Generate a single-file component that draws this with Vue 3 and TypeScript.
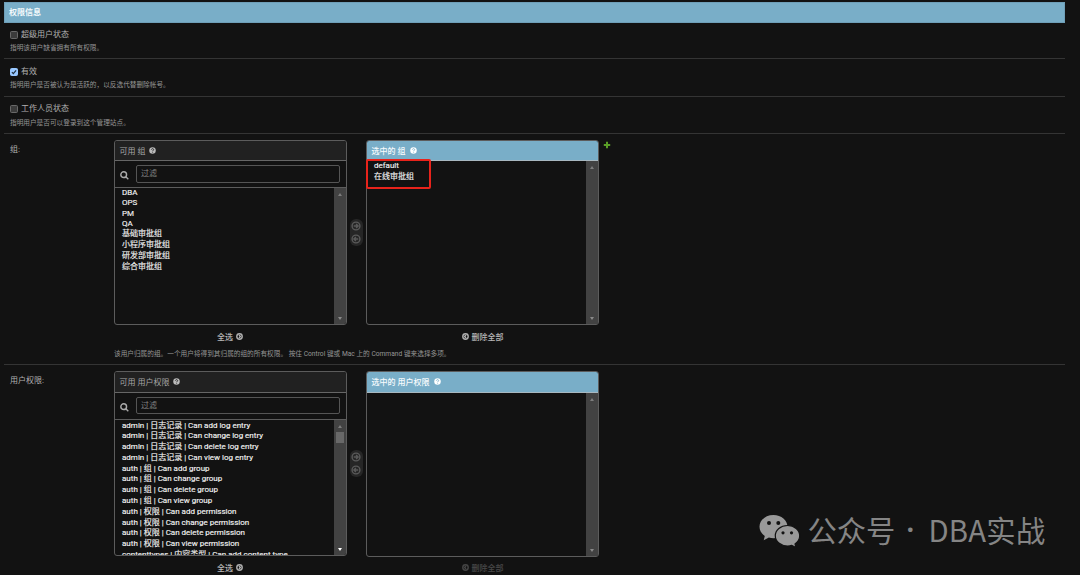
<script setup lang="ts">
interface Flag {
  label: string
  help: string
  checked: boolean
}
interface Selector {
  key: string
  label: string
  name: string
  available: string[]
  chosen: string[]
  help: string
}

const flags: Flag[] = [
  { label: '超级用户状态', help: '指明该用户缺省拥有所有权限。', checked: false },
  { label: '有效', help: '指明用户是否被认为是活跃的，以反选代替删除帐号。', checked: true },
  { label: '工作人员状态', help: '指明用户是否可以登录到这个管理站点。', checked: false },
]

const selectors: Selector[] = [
  {
    key: 'groups',
    label: '组:',
    name: '组',
    available: ['DBA', 'OPS', 'PM', 'QA', '基础审批组', '小程序审批组', '研发部审批组', '综合审批组'],
    chosen: ['default', '在线审批组'],
    help: '该用户归属的组。一个用户将得到其归属的组的所有权限。 按住 Control 键或 Mac 上的 Command 键来选择多项。',
  },
  {
    key: 'perms',
    label: '用户权限:',
    name: '用户权限',
    available: [
      'admin | 日志记录 | Can add log entry',
      'admin | 日志记录 | Can change log entry',
      'admin | 日志记录 | Can delete log entry',
      'admin | 日志记录 | Can view log entry',
      'auth | 组 | Can add group',
      'auth | 组 | Can change group',
      'auth | 组 | Can delete group',
      'auth | 组 | Can view group',
      'auth | 权限 | Can add permission',
      'auth | 权限 | Can change permission',
      'auth | 权限 | Can delete permission',
      'auth | 权限 | Can view permission',
      'contenttypes | 内容类型 | Can add content type',
    ],
    chosen: [],
    help: '',
  },
]

const isLatin = (text: string): boolean => /^[\x00-\x7f]+$/.test(text)
</script>

<template>
  <main class="page">
    <h2 class="module-title">权限信息</h2>

    <section v-for="flag in flags" :key="flag.label" class="flag-row">
      <div class="flag-line">
        <span class="checkbox" :class="{ checked: flag.checked }">
          <svg v-if="flag.checked" viewBox="0 0 8 8"><path d="M1.2 4.2 3.1 6.1 6.8 1.7" /></svg>
        </span>
        <span>{{ flag.label }}</span>
      </div>
      <p class="help">{{ flag.help }}</p>
    </section>

    <section v-for="s in selectors" :key="s.key" class="selector-row" :class="s.key">
      <div class="row-label">{{ s.label }}</div>
      <div class="row-body">
        <div class="selector">
          <div class="column">
            <div class="box available">
              <h3 class="box-title">
                <span>可用 {{ s.name }}</span>
                <svg class="q" viewBox="0 0 8 8"><circle cx="4" cy="4" r="3.7" /><path d="M2.8 3.1C2.8 1.5 5.3 1.5 5.3 3 5.3 3.9 4.1 3.8 4.1 4.8M4.1 5.6V6.4" /></svg>
              </h3>
              <div class="filter">
                <svg class="search" viewBox="0 0 10 10"><circle cx="4.1" cy="4.1" r="3.2" /><path d="m6.5 6.5 2.7 2.7" /></svg>
                <div class="input">过滤</div>
              </div>
              <div class="list">
                <ul class="options">
                  <li v-for="o in s.available" :key="o" :class="{ latin: isLatin(o) }">{{ o }}</li>
                </ul>
                <div class="scrollbar">
                  <i class="up"></i>
                  <b v-if="s.key === 'perms'" class="thumb"></b>
                  <i class="down" :class="{ active: s.key === 'perms' }"></i>
                </div>
              </div>
            </div>
            <div class="action all">
              <span>全选</span>
              <svg class="chev" viewBox="0 0 8 8"><circle cx="4" cy="4" r="3.1" /><path d="M3.4 2.4 5 4 3.4 5.6" /></svg>
            </div>
          </div>

          <div class="chooser">
            <svg viewBox="0 0 10 10"><circle cx="5" cy="5" r="3.9" /><path d="M2.8 5H7M5.1 3 7.1 5 5.1 7" /></svg>
            <svg viewBox="0 0 10 10"><circle cx="5" cy="5" r="3.9" /><path d="M7.200 5H3M4.900 3 2.900 5 4.900 7" /></svg>
          </div>

          <div class="column">
            <div class="box chosen">
              <h3 class="box-title">
                <span>选中的 {{ s.name }}</span>
                <svg class="q" viewBox="0 0 8 8"><circle cx="4" cy="4" r="3.7" /><path d="M2.8 3.1C2.8 1.5 5.3 1.5 5.3 3 5.3 3.9 4.1 3.8 4.1 4.8M4.1 5.6V6.4" /></svg>
              </h3>
              <div class="list">
                <ul class="options">
                  <li v-for="o in s.chosen" :key="o" :class="{ latin: isLatin(o) }">{{ o }}</li>
                </ul>
                <div class="scrollbar">
                  <i class="up"></i>
                  <i class="down"></i>
                </div>
              </div>
              <div v-if="s.key === 'groups'" class="highlight"></div>
            </div>
            <div class="action clear" :class="{ disabled: s.chosen.length === 0 }">
              <svg class="chev" viewBox="0 0 8 8"><circle cx="4" cy="4" r="3.1" /><path d="M4.600 2.400 3 4 4.600 5.600" /></svg>
              <span>删除全部</span>
            </div>
          </div>

          <svg v-if="s.key === 'groups'" class="plus" viewBox="0 0 8 8"><path d="M4 .8V7.2M.8 4H7.2" /></svg>
        </div>
        <p v-if="s.help" class="help wide">{{ s.help }}</p>
      </div>
    </section>

    <div class="watermark">
      <svg class="wechat" viewBox="0 0 42 34">
        <path class="bubble" d="M14.5 1C6.6 1 .5 6.2.5 12.8c0 3.8 2 7 5.300 9.200L4.700 26.300l5.200-2.700c1.500.4 3 .6 4.600.6C22.500 24.200 28.500 19.300 28.500 12.800 28.500 6.200 22.400 1 14.500 1Z" />
        <path class="bubble front" d="M28.500 11.500C21.600 11.500 16.300 16 16.300 21.800s5.300 10.200 12.200 10.200c1.500 0 2.900-.2 4.200-.6L37 33.600l-1-3.700c2.900-1.900 4.700-4.800 4.700-8.100 0-5.800-5.300-10.300-12.200-10.300Z" />
        <g class="eyes"><circle cx="10" cy="9" r="2" /><circle cx="19.300" cy="9" r="2" /><circle cx="24" cy="18.800" r="1.600" /><circle cx="32.500" cy="18.800" r="1.600" /></g>
      </svg>
      <span class="account">公众号</span>
      <span class="dot">·</span>
      <span class="brand">DBA实战</span>
    </div>
  </main>
</template>

<style>
body {
  background: #121212;
}
</style>

<style scoped>
* {
  box-sizing: border-box;
}
.page {
  position: relative;
  height: 575px;
  overflow: hidden;
  padding: 2px 15px 0 4px;
  background: #121212;
  color: #b0b0b0;
  font-family: Roboto, "Noto Sans CJK SC", sans-serif;
  font-size: 8px;
}
h2, h3, p, ul {
  margin: 0;
  padding: 0;
}
.module-title {
  height: 20.5px;
  padding-left: 4px;
  border: 1px solid #6f9fb8;
  background: #79aec8;
  color: #f4fafc;
  font-size: 8px;
  font-weight: 700;
  line-height: 19px;
}
.flag-row {
  height: 37.5px;
  padding: 6.5px 0 0 6px;
  border-bottom: 1px solid #343434;
}
.flag-row:nth-of-type(1) {
  height: 36.5px;
  padding-top: 6px;
}
.flag-line {
  display: flex;
  align-items: center;
  gap: 3px;
  height: 12px;
  line-height: 12px;
}
.checkbox {
  width: 8px;
  height: 8px;
  border: 1px solid #686868;
  border-radius: 1.5px;
  background: #3b3b3b;
}
.checkbox.checked {
  border-color: #99c8ff;
  background: #99c8ff;
}
.checkbox svg {
  display: block;
  width: 6px;
  height: 6px;
}
.checkbox path {
  fill: none;
  stroke: #20303f;
  stroke-width: 1.6;
}
.help {
  height: 10px;
  margin-top: 2.5px;
  color: #969696;
  font-size: 6.67px;
  line-height: 10px;
  white-space: nowrap;
}
.selector-row {
  display: flex;
  padding: 6px 0 0 6px;
  border-bottom: 1px solid #343434;
}
.groups {
  height: 231px;
}
.perms {
  height: 240px;
}
.row-label {
  width: 104px;
  padding-top: 4px;
  line-height: 12px;
}
.selector {
  display: flex;
  align-items: flex-start;
}
.column {
  width: 233px;
}
.box {
  display: flex;
  flex-direction: column;
  position: relative;
  height: 185px;
  overflow: hidden;
  border: 1px solid #5c5c5c;
  border-radius: 3px;
}
.chosen {
  overflow: visible;
}
.perms .chosen {
  height: 186px;
}
.perms .clear {
  height: 21px;
}
.box-title {
  display: flex;
  flex: none;
  align-items: center;
  gap: 4px;
  height: 20px;
  padding-left: 4.5px;
  border-bottom: 1px solid #666;
  background: #212121;
  color: #a5a5a5;
  font-size: 8px;
  font-weight: 400;
}
.perms .box-title {
  height: 20.5px;
}
.chosen .box-title {
  border-radius: 2px 2px 0 0;
  border-color: #a8b8c0;
  background: #79aec8;
  color: #f7fbfd;
  font-weight: 500;
}
.q {
  width: 7px;
  height: 7px;
}
.q circle {
  fill: #bbb;
}
.q path {
  fill: none;
  stroke: #212121;
  stroke-width: 1;
}
.chosen .q circle {
  fill: #fff;
}
.chosen .q path {
  stroke: #79aec8;
}
.filter {
  display: flex;
  flex: none;
  align-items: center;
  gap: 7px;
  height: 27px;
  padding: 0 6px 0 5px;
  border-bottom: 1px solid #5c5c5c;
}
.search {
  width: 9px;
  height: 9px;
  margin-top: 3px;
}
.search circle,
.search path {
  fill: none;
  stroke: #aaa;
  stroke-width: 1.6;
}
.input {
  flex: 1;
  height: 17.5px;
  padding-left: 4px;
  border: 1px solid #555;
  border-radius: 2px;
  color: #858585;
  line-height: 15.5px;
}
.list {
  display: flex;
  flex: 1;
  min-height: 0;
  overflow: hidden;
}
.options {
  flex: 1;
  padding-left: 7px;
  color: #f0f0f0;
  list-style: none;
  white-space: nowrap;
  -webkit-text-stroke: 0.15px #f0f0f0;
}
.perms .options {
  padding-top: 1px;
}
.options li {
  height: 10.8px;
  line-height: 10.8px;
}
.options li.latin {
  height: 10.3px;
  line-height: 10.3px;
}
.chosen .options li.latin {
  height: 11px;
}
.scrollbar {
  display: flex;
  flex: none;
  flex-direction: column;
  align-items: center;
  width: 12px;
  padding: 5px 0 4px;
  background: #424242;
}
.up,
.down {
  border: 2.5px solid transparent;
}
.up {
  border-top-width: 0;
  border-bottom: 3px solid #7d7d7d;
}
.down {
  margin-top: auto;
  border-top: 3px solid #8a8a8a;
  border-bottom-width: 0;
}
.down.active {
  border-top-color: #fff;
}
.thumb {
  width: 8px;
  height: 11.5px;
  margin-top: 4px;
  background: #686868;
}
.highlight {
  position: absolute;
  top: 17.5px;
  left: -1px;
  width: 65px;
  height: 30px;
  border: 2px solid #e8231b;
  border-radius: 2px;
}
.action {
  display: flex;
  align-items: center;
  justify-content: center;
  gap: 3px;
  height: 22px;
  padding-right: 1px;
  color: #b8b8b8;
  font-weight: 500;
}
.clear {
  padding-right: 0;
}
.chev {
  width: 7px;
  height: 7px;
}
.chev circle,
.chev path {
  fill: none;
  stroke: #b0b0b0;
  stroke-width: 1.6;
}
.disabled {
  opacity: 0.32;
}
.chooser {
  display: flex;
  flex-direction: column;
  gap: 3.5px;
  width: 12.5px;
  height: 27px;
  margin: 79px 3.5px 0 3px;
  padding: 1.5px 1.25px;
  border-radius: 6px;
  background: #262626;
}
.chooser svg {
  width: 10px;
  height: 10px;
}
.chooser circle,
.chooser path {
  fill: none;
  stroke: #5a5a5a;
  stroke-width: 1.4;
}
.plus {
  width: 8px;
  height: 8px;
  margin: 1px 0 0 4px;
}
.plus path {
  fill: none;
  stroke: #5a9e27;
  stroke-width: 2;
}
.wide {
  margin-top: 2px;
}
.watermark {
  display: flex;
  position: absolute;
  top: 506px;
  left: 759px;
  align-items: center;
  height: 46px;
  color: #858585;
  font-family: "Noto Sans CJK SC", sans-serif;
  font-size: 29.3px;
  font-weight: 400;
  line-height: 46px;
}
.wechat {
  width: 42px;
  height: 34px;
  margin-top: 4px;
}
.bubble {
  fill: #999;
}
.front {
  stroke: #121212;
  stroke-width: 1.2;
}
.eyes {
  fill: #121212;
}
.account {
  margin-left: 6.5px;
}
.dot {
  width: 30px;
  font-family: "Noto Sans", sans-serif;
  font-weight: 600;
  text-align: center;
}
.brand {
  margin-left: 3px;
  letter-spacing: 0.25px;
}
</style>
